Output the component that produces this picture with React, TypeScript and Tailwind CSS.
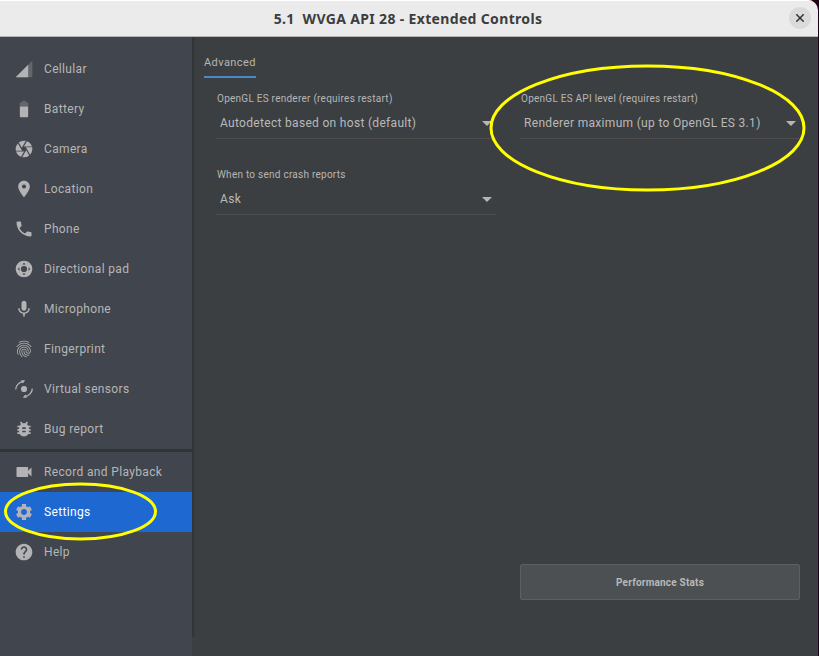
import type { ReactNode } from "react";
import {
  MdBugReport,
  MdCamera,
  MdFingerprint,
  MdHelp,
  MdMic,
  MdPhone,
  MdPlace,
  MdSettings,
  MdVideocam,
} from "react-icons/md";

function CellularIcon() {
  return (
    <svg viewBox="0 0 24 24" className="size-5" fill="currentColor">
      <path fillOpacity=".3" d="M2 22h20V2z" />
      <path d="M17 7L2 22h15z" />
    </svg>
  );
}

function BatteryIcon() {
  return (
    <svg viewBox="0 0 24 24" className="size-5" fill="currentColor">
      <path fillOpacity=".3" d="M17 5.33C17 4.6 16.4 4 15.67 4H14V2h-4v2H8.33C7.6 4 7 4.6 7 5.33V9h10z" />
      <path d="M7 9v11.67C7 21.4 7.6 22 8.33 22h7.33c.74 0 1.34-.6 1.34-1.33V9z" />
    </svg>
  );
}

function DpadIcon() {
  return (
    <svg viewBox="0 0 24 24" className="size-5" fill="currentColor">
      <path
        fillRule="evenodd"
        d="M12 2a10 10 0 1 0 0 20 10 10 0 0 0 0-20zM12 8.300a3.700 3.700 0 1 1 0 7.400 3.700 3.700 0 0 1 0-7.400zM12 4.500l2 2H10zM12 19.500L10 17.500h4zM4.500 12L6.500 10v4zM19.500 12L17.500 14V10z"
      />
    </svg>
  );
}

function SensorsIcon() {
  return (
    <svg viewBox="0 0 24 24" className="size-5" fill="none" stroke="currentColor" strokeWidth="1.6">
      <circle cx="12" cy="12" r="3.700" fill="currentColor" stroke="none" />
      <path d="M2 12.500A10.300 10.300 0 0 1 11 3M22 11.500A10.300 10.300 0 0 1 13 21" />
      <path fill="currentColor" stroke="none" d="M8.500 1.500h5L10.500 5.500zM15.500 22.500h-5L13.500 18.500z" />
    </svg>
  );
}

function NavItem({ icon, label, active = false }: { icon: ReactNode; label: string; active?: boolean }) {
  return (
    <li className={`flex h-10 items-center pl-3.5 ${active ? "bg-[#1e68d2]" : ""}`}>
      <span className="text-[#b3b3b5]">{icon}</span>
      <span className={`ml-2.5 text-[12px] tracking-[0.34px] whitespace-nowrap ${active ? "text-white" : "text-[#b6b6b6]"}`}>
        {label}
      </span>
    </li>
  );
}

function Select({ label, value }: { label: string; value: string }) {
  return (
    <div className="h-[49px] w-[280px] border-b border-[#4f4c4c] pt-px">
      <div className="pl-px text-[10px] leading-4 tracking-[0.25px] text-[#b6b6b6]">{label}</div>
      <div className="mt-2 flex items-center justify-between pr-1 pl-1">
        <span className="text-[12px] leading-4 tracking-[0.31px] text-[#b9b9b9]">{value}</span>
        <svg viewBox="0 0 10 5" className="h-[5px] w-[10px]" fill="#b6b6b6">
          <path d="M0 0h10L5 5z" />
        </svg>
      </div>
    </div>
  );
}

export default function App() {
  return (
    <div className="relative h-[656px] w-[819px] overflow-hidden bg-[#200016] font-['Roboto',sans-serif]">
      <div className="flex h-full w-[818px] flex-col overflow-hidden rounded-tr-[10px]">
        <header className="flex h-[37px] shrink-0 items-center border-t border-b border-t-white border-b-[#b5b5b5] bg-[#ebebeb] pr-[7px] pl-[27px]">
          <h1 className="grow text-center font-['Noto_Sans',sans-serif] text-[14px] leading-5 font-bold tracking-[0.34px] whitespace-pre text-[#3d3d3d]">
            {"5.1  WVGA API 28 - Extended Controls"}
          </h1>
          <button className="mb-px flex size-[22px] items-center justify-center rounded-full bg-[#dadada]" aria-label="Close">
            <svg viewBox="0 0 8 8" className="size-2" stroke="#333" strokeWidth="1.5">
              <path d="M0.300 0.300l7.400 7.400M7.700 0.300L0.300 7.700" />
            </svg>
          </button>
        </header>
        <div className="flex min-h-0 grow bg-[#3c3f41]">
          <nav className="w-48 shrink-0 bg-[#41454d] pt-3">
            <ul>
              <NavItem icon={<CellularIcon />} label="Cellular" />
              <NavItem icon={<BatteryIcon />} label="Battery" />
              <NavItem icon={<MdCamera size={20} />} label="Camera" />
              <NavItem icon={<MdPlace size={20} />} label="Location" />
              <NavItem icon={<MdPhone size={20} />} label="Phone" />
              <NavItem icon={<DpadIcon />} label="Directional pad" />
              <NavItem icon={<MdMic size={20} />} label="Microphone" />
              <NavItem icon={<MdFingerprint size={20} />} label="Fingerprint" />
              <NavItem icon={<SensorsIcon />} label="Virtual sensors" />
              <NavItem icon={<MdBugReport size={20} />} label="Bug report" />
            </ul>
            <div className="h-[3px] bg-[#313335]" />
            <ul>
              <NavItem icon={<MdVideocam size={20} />} label="Record and Playback" />
              <NavItem icon={<MdSettings size={20} />} label="Settings" active />
              <NavItem icon={<MdHelp size={20} />} label="Help" />
            </ul>
          </nav>
          <div className="h-[600px] w-[3px] shrink-0 bg-linear-to-r from-[#303334] to-[#393c3d]" />
          <main className="flex grow flex-col pl-[9px]">
            <div className="mt-4 h-[25px] w-[52px] border-b-2 border-[#4a88c7] pt-px text-[11px] leading-[18px] tracking-[0.42px] text-[#b6b6b6]">
              Advanced
            </div>
            <div className="mt-3 ml-3 grid grid-cols-[280px_280px] gap-x-6 gap-y-[27px]">
              <Select label="OpenGL ES renderer (requires restart)" value="Autodetect based on host (default)" />
              <Select label="OpenGL ES API level (requires restart)" value="Renderer maximum (up to OpenGL ES 3.1)" />
              <Select label="When to send crash reports" value="Ask" />
            </div>
            <button className="mt-auto mr-[18px] mb-14 h-9 w-[280px] self-end rounded-[2px] border border-[#5e6060] bg-[#4c5052] text-[10px] font-bold tracking-[0.2px] text-[#b9b9b9]">
              Performance Stats
            </button>
          </main>
        </div>
      </div>
      <svg className="pointer-events-none absolute inset-0 h-full w-full" fill="none" stroke="#ffff00" strokeWidth="3">
        <ellipse cx="647.500" cy="128" rx="156.500" ry="62" />
        <ellipse cx="80.500" cy="511.500" rx="75" ry="27.500" />
      </svg>
    </div>
  );
}
